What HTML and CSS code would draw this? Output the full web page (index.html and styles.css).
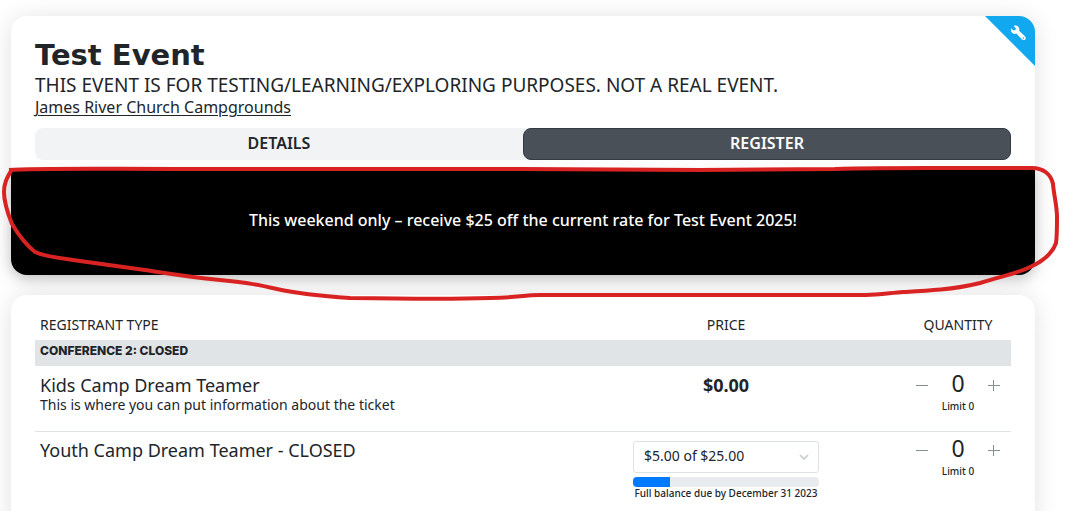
FILE: index.html
```html
<!DOCTYPE html>
<html lang="en">
<head>
<meta charset="utf-8">
<title>Test Event</title>
<link rel="stylesheet" href="styles.css">
</head>
<body>
<main class="page">
  <section class="card event">
    <button class="corner" type="button" aria-label="Event settings">
      <svg class="wrench" viewBox="0 0 16 16" aria-hidden="true">
        <path d="M1.1 3.2 3.5 5.5 5.4 5.1 5.9 3.2 3.7.9C5.2.3 7.2.5 8.3 1.8c1 1.1 1.3 2.5.8 3.9l5.8 5.5c1.1 1 1.2 2.4.3 3.3s-2.4.8-3.4-.2L6.3 8.6C4.8 9.2 3.1 8.8 2 7.7.8 6.5.5 4.7 1.1 3.2Zm12.3 9a.8.8 0 1 0 0 1.6.8.8 0 0 0 0-1.6Z"/>
      </svg>
    </button>
    <header class="event-head">
      <h1 class="title">Test Event</h1>
      <p class="subtitle">THIS EVENT IS FOR TESTING/LEARNING/EXPLORING PURPOSES. NOT A REAL EVENT.</p>
      <a class="place" href="#">James River Church Campgrounds</a>
      <nav class="tabs">
        <button class="tab" type="button">DETAILS</button>
        <button class="tab tab-active" type="button">REGISTER</button>
      </nav>
    </header>
    <p class="banner">This weekend only – receive $25 off the current rate for Test Event 2025!</p>
  </section>

  <section class="card list">
    <table class="tickets">
      <thead>
        <tr><th class="col-type">REGISTRANT TYPE</th><th class="col-price">PRICE</th><th class="col-qty">QUANTITY</th></tr>
      </thead>
      <tbody>
        <tr class="group"><th colspan="3">CONFERENCE 2: CLOSED</th></tr>
        <tr class="ticket">
          <td><div class="name">Kids Camp Dream Teamer</div><div class="info">This is where you can put information about the ticket</div></td>
          <td class="center"><div class="price">$0.00</div></td>
          <td class="center">
            <div class="stepper">
              <button class="step" type="button" aria-label="Remove one"><svg viewBox="0 0 12 12"><path d="M0 6.5H12"/></svg></button>
              <span class="count">0</span>
              <button class="step" type="button" aria-label="Add one"><svg viewBox="0 0 12 12"><path d="M0 6.5H12M5.5 1V12"/></svg></button>
            </div>
            <div class="small">Limit 0</div>
          </td>
        </tr>
        <tr class="ticket">
          <td><div class="name">Youth Camp Dream Teamer - CLOSED</div></td>
          <td class="center">
            <div class="plan">
              <div class="select-box">
                <select class="select" aria-label="Payment amount"><option>$5.00 of $25.00</option></select>
                <svg class="chevron" viewBox="0 0 10 6" aria-hidden="true"><path d="M1 1l4 4 4-4"/></svg>
              </div>
              <div class="bar"><div class="bar-fill" style="width:20%"></div></div>
              <div class="small">Full balance due by December 31 2023</div>
            </div>
          </td>
          <td class="center">
            <div class="stepper">
              <button class="step" type="button" aria-label="Remove one"><svg viewBox="0 0 12 12"><path d="M0 6.5H12"/></svg></button>
              <span class="count">0</span>
              <button class="step" type="button" aria-label="Add one"><svg viewBox="0 0 12 12"><path d="M0 6.5H12M5.5 1V12"/></svg></button>
            </div>
            <div class="small">Limit 0</div>
          </td>
        </tr>
      </tbody>
    </table>
  </section>

  <svg class="marker" viewBox="0 160 1071 150" preserveAspectRatio="none" aria-hidden="true">
    <path d="M9 170C40 168 90 169 200 169L520 169 700 170 835 169C850 168 880 168 930 168H1032C1043 168 1051 174 1053 184C1054 196 1057 206 1057 217C1057 228 1057 237 1056 243C1052 255 1042 262 1028 268C1015 274 1002 276 980 283C952 290 925 291 903 292C890 293 878 295 866 295H540C523 295 515 298 490 298C460 299 420 299 350 298C320 296 295 293 277 289C259 285 250 283 220 280C190 277 178 275 145 270L80 261C60 258 46 257 35 252C25 244 18 234 12 224C8 214 4 202 4 192C4 183 7 178 11 171"/>
  </svg>
</main>
</body>
</html>
```
FILE: styles.css
```css
* { box-sizing: border-box; }
body {
  margin: 0;
  background: #fff;
  color: #212529;
  font-family: "Noto Sans", "Open Sans", sans-serif;
  font-size: 14px;
}
h1, p { margin: 0; }
button, select { font: inherit; color: inherit; border: 0; margin: 0; }
.page {
  position: relative;
  display: flex;
  flex-direction: column;
  gap: 20px;
  padding: 16px 36px 0 11px;
}
.card {
  position: relative;
  background: #fff;
  border-radius: 16px;
  box-shadow: 0 2px 24px rgba(0, 0, 0, .12);
}
.event-head {
  display: flex;
  flex-direction: column;
  align-items: flex-start;
  padding: 21px 24px 10px;
}
.title { font-family: "DejaVu Sans", sans-serif; font-size: 29px; line-height: 36px; font-weight: 700; }
.subtitle { font-size: 19px; line-height: 24px; }
.place { color: inherit; font-size: 16px; line-height: 20px; text-underline-offset: 2px; }
.tabs {
  display: flex;
  align-self: stretch;
  margin-top: 11px;
  background: #f1f3f5;
  border-radius: 8px;
}
.tab {
  flex: 1 1 0;
  height: 32px;
  padding: 0 0 3px;
  background: none;
  border: 1px solid transparent;
  border-radius: 8px;
  font-size: 16px;
  font-weight: 600;
}
.tab-active { background: #495057; border-color: #343a44; color: #fff; }
.banner {
  padding: 38px 24px 43px;
  background: #000;
  border-radius: 0 0 16px 16px;
  box-shadow: 0 4px 12px rgba(0, 0, 0, .16);
  color: #fff;
  font-size: 16px;
  line-height: 24px;
  font-weight: 500;
  text-align: center;
}
.corner {
  position: absolute;
  top: 0;
  right: 0;
  width: 50px;
  height: 50px;
  padding: 0;
  background: #11a8f0;
  border-radius: 0 16px 0 0;
  clip-path: polygon(0 0, 100% 0, 100% 100%);
}
.wrench { position: absolute; top: 9px; right: 9px; width: 16px; height: 16px; fill: #fff; fill-rule: evenodd; }

.list { padding: 20px 24px 32px; }
.tickets { width: 100%; border-collapse: collapse; table-layout: fixed; }
.tickets th { padding: 0 5px 5px; font-weight: 400; line-height: 20px; text-align: center; }
.tickets .col-type { text-align: left; }
.col-price { width: 358px; }
.col-qty { width: 106px; }
.tickets .group th {
  height: 26px;
  padding: 0 5px 4px;
  background: #e1e4e7;
  font-family: Inter, "Noto Sans", sans-serif;
  font-size: 12px;
  font-weight: 800;
  text-align: left;
}
.ticket td { height: 65px; padding: 8px 5px 0; vertical-align: top; }
.ticket + .ticket td { padding-top: 7px; border-top: 1px solid #dee2e6; }
.ticket .center { text-align: center; }
.name { font-size: 18px; line-height: 22px; }
.info { font-size: 14px; line-height: 18px; }
.price { font-size: 18px; line-height: 22px; font-weight: 700; }
.stepper { display: flex; justify-content: center; align-items: center; gap: 22px; height: 18px; }
.step { display: flex; padding: 4px 0 0; width: 12px; background: none; }
.step svg { width: 12px; height: 12px; fill: none; stroke: #868e96; stroke-width: 1; }
.count { width: 16px; font-size: 23px; line-height: 18px; }
.small { font-size: 10px; line-height: 12px; font-weight: 500; }
.stepper + .small { margin-top: 8px; }
.plan { width: 186px; margin: 2px auto 0; }
.select-box { position: relative; }
.select {
  display: block;
  width: 100%;
  height: 32px;
  padding: 0 28px 3px 10px;
  appearance: none;
  background: #fff;
  border: 1px solid #dee2e6;
  border-radius: 3px;
  font-size: 14px;
}
.chevron { position: absolute; right: 10px; top: 13px; width: 10px; height: 6px; fill: none; stroke: #ced4da; stroke-width: 2; }
.bar { height: 10px; margin-top: 4px; background: #e9ecef; border-radius: 4px; overflow: hidden; }
.bar-fill { height: 100%; background: #007bff; }
.marker {
  position: absolute;
  left: 0;
  top: 160px;
  width: 100%;
  height: 150px;
  fill: none;
  stroke: #d92323;
  stroke-width: 4;
  stroke-linejoin: round;
  pointer-events: none;
}
```
